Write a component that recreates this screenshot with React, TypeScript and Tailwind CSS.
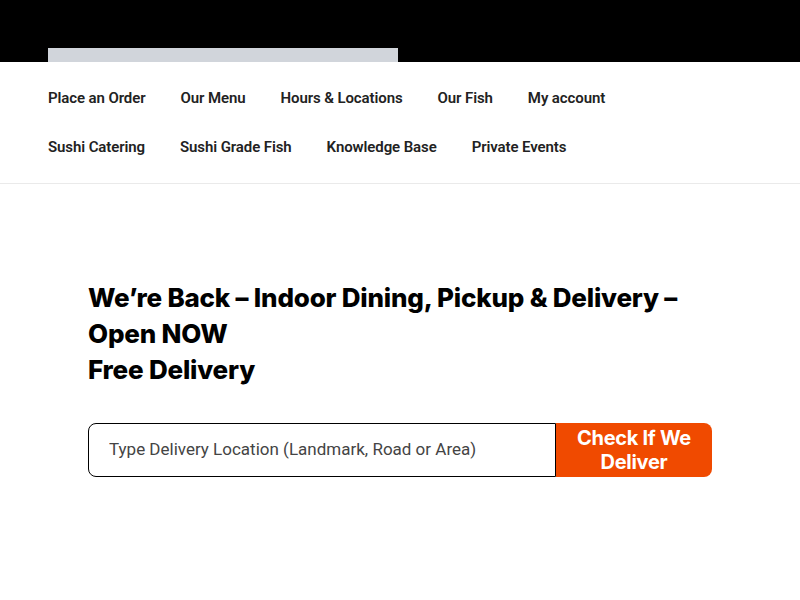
const row1 = ["Place an Order", "Our Menu", "Hours & Locations", "Our Fish", "My account"];
const row2 = ["Sushi Catering", "Sushi Grade Fish", "Knowledge Base", "Private Events"];

function NavRow({ items }: { items: string[] }) {
  return (
    <ul className="flex h-[49px] items-center gap-[35px]">
      {items.map((label) => (
        <li key={label}>
          <a href="#" className="text-[15px] font-semibold tracking-[-0.1px] text-[#222]">
            {label}
          </a>
        </li>
      ))}
    </ul>
  );
}

export default function App() {
  return (
    <div className="min-h-[600px] bg-white font-['Roboto',sans-serif]">
      {/* top bar */}
      <div className="flex h-[62px] items-end bg-black pl-12">
        <div className="h-[14px] w-[350px] bg-[#d1d5db]" />
      </div>

      {/* navigation */}
      <nav className="border-b border-[#eaeaea] px-12 pt-[11px] pb-[12px]">
        <NavRow items={row1} />
        <NavRow items={row2} />
      </nav>

      {/* hero */}
      <section className="px-[88px] pt-[96px]">
        <h1 className="font-['Inter',sans-serif] text-[26px] font-extrabold leading-[36px] tracking-[-0.2px] text-black">
          We’re Back – Indoor Dining, Pickup &amp; Delivery –<br />
          Open NOW
          <br />
          Free Delivery
        </h1>

        <form className="mt-[35px] flex h-[54px] w-[624px]">
          <input
            type="text"
            placeholder="Type Delivery Location (Landmark, Road or Area)"
            className="min-w-0 flex-1 rounded-l-lg border border-black px-5 text-[17px] text-[#333] placeholder:text-[#444] outline-none"
          />
          <button
            type="button"
            className="w-[156px] rounded-r-lg bg-[#f04a00] px-3 font-['Inter',sans-serif] text-[20px] font-bold leading-[24px] tracking-[-0.3px] text-white"
          >
            Check If We Deliver
          </button>
        </form>
      </section>
    </div>
  );
}
